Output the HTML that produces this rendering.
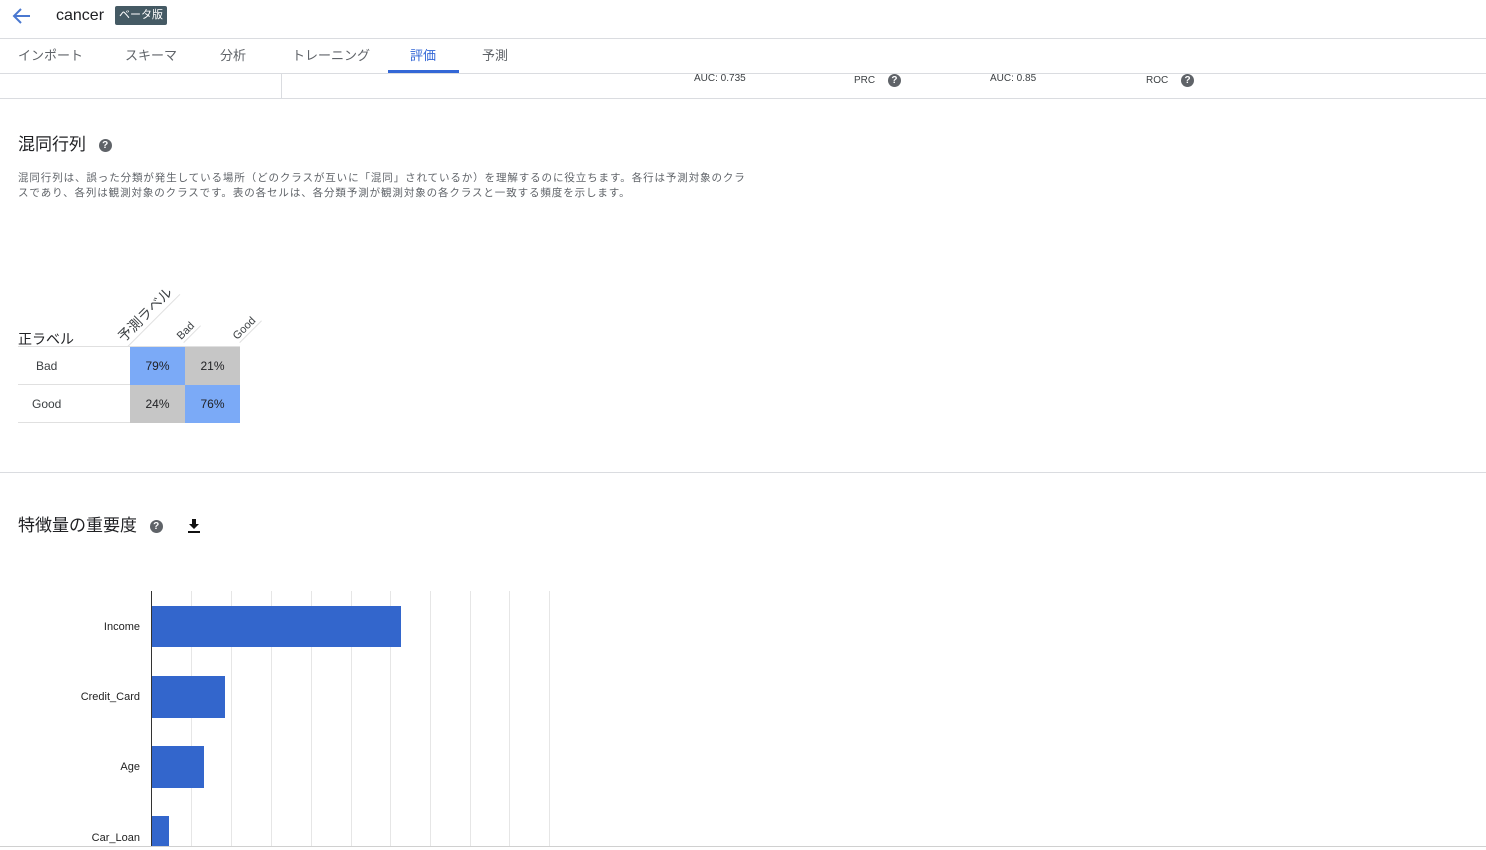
<!DOCTYPE html>
<html><head><meta charset="utf-8"><style>
*{margin:0;padding:0;box-sizing:border-box}
body{width:1486px;height:850px;overflow:hidden;background:#fff;font-family:"Liberation Sans","Noto Sans CJK JP",sans-serif;color:#202124;position:relative}
.a{position:absolute;white-space:nowrap}
.hl{position:absolute;left:0;width:1486px;height:1px;background:#dadce0}
.tab{position:absolute;top:45px;font-size:13px;color:#5f6368}
.q{display:inline-block;width:13px;height:13px;border-radius:50%;background:#5f6368;color:#fff;font-size:10px;font-weight:bold;text-align:center;line-height:13px}
.gl{position:absolute;top:591px;width:1px;height:256px;background:#e6e6e6}
.bar{position:absolute;left:152px;background:#3366cc}
.yl{position:absolute;right:1346px;font-size:11px;color:#222;white-space:nowrap}
.cell{position:absolute;width:55px;height:38px;font-size:12px;text-align:center;line-height:38px;color:#202124}
</style></head><body>
<svg class="a" style="left:12px;top:7px" width="20" height="18" viewBox="0 0 20 18"><path d="M18 9H3M9 2L2 9l7 7" fill="none" stroke="#4a78d0" stroke-width="2"/></svg>
<div class="a" style="left:56px;top:7px;font-size:16px;color:#202124">cancer</div>
<div class="a" style="left:115px;top:6px;height:19px;padding:0 4px;background:#455a64;color:#fff;font-size:11px;line-height:19px;border-radius:2px">ベータ版</div>
<div class="hl" style="top:38px"></div>
<div class="tab" style="left:18px">インポート</div>
<div class="tab" style="left:125px">スキーマ</div>
<div class="tab" style="left:220px">分析</div>
<div class="tab" style="left:292px">トレーニング</div>
<div class="tab" style="left:410px;color:#3367d6">評価</div>
<div class="tab" style="left:482px">予測</div>
<div class="a" style="left:388px;top:70px;width:71px;height:3px;background:#3367d6"></div>
<div class="hl" style="top:73px"></div>
<div class="a" style="left:281px;top:73px;width:1px;height:25px;background:#dadce0"></div>
<div class="hl" style="top:98px"></div>
<div class="a" style="left:694px;top:73px;font-size:10px;color:#3c4043">AUC: 0.735</div>
<div class="a" style="left:854px;top:74px;font-size:10px;color:#3c4043">PRC <span class="q" style="margin-left:10px">?</span></div>
<div class="a" style="left:990px;top:73px;font-size:10px;color:#3c4043">AUC: 0.85</div>
<div class="a" style="left:1146px;top:74px;font-size:10px;color:#3c4043">ROC <span class="q" style="margin-left:10px">?</span></div>

<div class="a" style="left:18px;top:130px;font-size:17px">混同行列 <span class="q" style="margin-left:8px;vertical-align:middle">?</span></div>
<div class="a" style="left:18px;top:171px;font-size:10.5px;color:#5f6368;line-height:15px;letter-spacing:0.9px">混同行列は、誤った分類が発生している場所（どのクラスが互いに「混同」されているか）を理解するのに役立ちます。各行は予測対象のクラ<br>スであり、各列は観測対象のクラスです。表の各セルは、各分類予測が観測対象の各クラスと一致する頻度を示します。</div>

<div class="a" style="left:18px;top:329px;font-size:14px">正ラベル</div>
<div class="a" style="left:128px;top:326px;font-size:14px;color:#3c4043;transform:rotate(-45deg);transform-origin:0 100%;border-bottom:1px solid #e0e0e0;padding-right:4px">予測ラベル</div>
<div class="a" style="left:184px;top:330px;font-size:11px;color:#3c4043;transform:rotate(-45deg);transform-origin:0 100%;border-bottom:1px solid #e0e0e0;padding-right:4px">Bad</div>
<div class="a" style="left:240px;top:330px;font-size:11px;color:#3c4043;transform:rotate(-45deg);transform-origin:0 100%;border-bottom:1px solid #e0e0e0;padding-right:4px">Good</div>
<div class="a" style="left:18px;top:346px;width:222px;height:1px;background:#e0e0e0"></div>
<div class="a" style="left:18px;top:384px;width:222px;height:1px;background:#e0e0e0"></div>
<div class="a" style="left:18px;top:422px;width:222px;height:1px;background:#e0e0e0"></div>
<div class="a" style="left:36px;top:359px;font-size:12px;color:#3c4043">Bad</div>
<div class="a" style="left:32px;top:397px;font-size:12px;color:#3c4043">Good</div>
<div class="cell" style="left:130px;top:347px;background:#7baaf7">79%</div>
<div class="cell" style="left:185px;top:347px;background:#c6c6c6">21%</div>
<div class="cell" style="left:130px;top:385px;background:#c6c6c6">24%</div>
<div class="cell" style="left:185px;top:385px;background:#7baaf7">76%</div>

<div class="hl" style="top:472px"></div>
<div class="a" style="left:18px;top:511px;font-size:17px">特徴量の重要度 <span class="q" style="margin-left:8px;vertical-align:middle">?</span></div>
<svg class="a" style="left:187px;top:518px" width="14" height="16" viewBox="0 0 14 16"><path d="M5 1h4v5h3l-5 5-5-5h3z" fill="#111"/><rect x="1" y="13" width="12" height="2" fill="#111"/></svg>

<div class="gl" style="left:191px"></div><div class="gl" style="left:231px"></div><div class="gl" style="left:271px"></div><div class="gl" style="left:311px"></div><div class="gl" style="left:351px"></div><div class="gl" style="left:390px"></div><div class="gl" style="left:430px"></div><div class="gl" style="left:470px"></div><div class="gl" style="left:509px"></div><div class="gl" style="left:549px"></div>
<div class="a" style="left:151px;top:591px;width:1px;height:256px;background:#333"></div>
<div class="bar" style="top:606px;width:249px;height:41px"></div>
<div class="bar" style="top:676px;width:73px;height:42px"></div>
<div class="bar" style="top:746px;width:52px;height:42px"></div>
<div class="bar" style="top:816px;width:17px;height:31px"></div>
<div class="yl" style="top:621px">Income</div>
<div class="yl" style="top:691px">Credit_Card</div>
<div class="yl" style="top:761px">Age</div>
<div class="yl" style="top:832px">Car_Loan</div>
<div class="hl" style="top:846px;background:#d0d0d0"></div>
</body></html>
